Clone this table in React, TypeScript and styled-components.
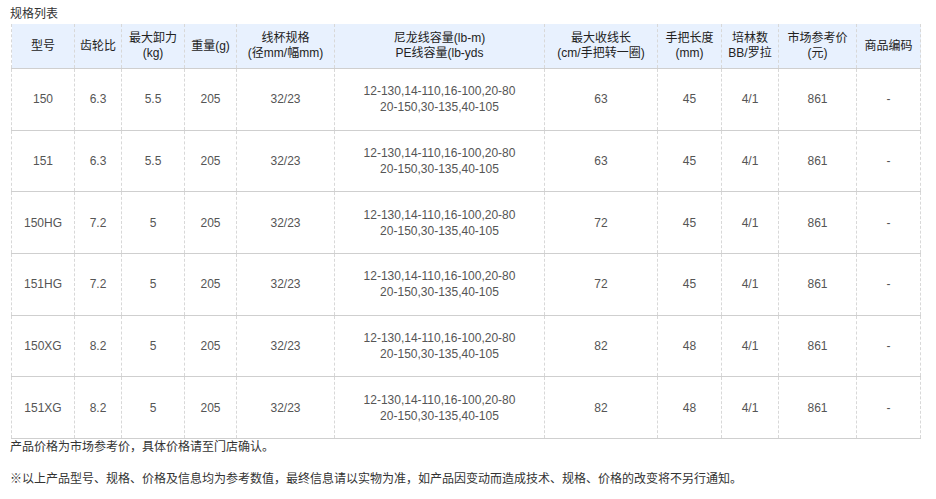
import React from "react";
import styled, { createGlobalStyle } from "styled-components";

const Global = createGlobalStyle`
  html, body { margin: 0; padding: 0; background: #fff; }
  body { font-family: "Liberation Sans", Arial, "Noto Sans CJK SC", sans-serif; font-size: 12px; color: #333; }
`;

const Page = styled.div`
  padding: 4px 0 0 10px;
  width: 926px;
  box-sizing: border-box;
`;

const Title = styled.div`
  font-size: 12px;
  line-height: 20px;
  color: #333;
`;

const Table = styled.table`
  margin-left: 1px;
  border-collapse: collapse;
  table-layout: fixed;
  width: 909px;
`;

const Th = styled.th`
  background: #e8f1fe;
  height: 44px;
  padding: 0;
  font-weight: normal;
  font-size: 12px;
  line-height: 15px;
  color: #222;
  text-align: center;
  vertical-align: middle;
  border-left: 1px dashed #d8d8d8;
  border-right: 1px dashed #d8d8d8;
  border-bottom: 1px solid #cfcfcf;
`;

const Td = styled.td`
  height: 60.7px;
  padding: 0;
  font-size: 12px;
  line-height: 16px;
  color: #555;
  text-align: center;
  vertical-align: middle;
  border-left: 1px dashed #d8d8d8;
  border-right: 1px dashed #d8d8d8;
  border-bottom: 1px solid #cfcfcf;
`;

const Note = styled.p<{ $gap?: number }>`
  margin: ${(p) => p.$gap ?? 0}px 0 0;
  font-size: 12px;
  line-height: 16px;
  color: #333;
`;

const widths = [63, 47, 63, 52, 98, 210, 113, 64, 57, 78, 64];

const headers: string[][] = [
  ["型号"],
  ["齿轮比"],
  ["最大卸力", "(kg)"],
  ["重量(g)"],
  ["线杯规格", "(径mm/幅mm)"],
  ["尼龙线容量(lb-m)", "PE线容量(lb-yds"],
  ["最大收线长", "(cm/手把转一圈)"],
  ["手把长度", "(mm)"],
  ["培林数", "BB/罗拉"],
  ["市场参考价", "(元)"],
  ["商品编码"],
];

const cap = ["12-130,14-110,16-100,20-80", "20-150,30-135,40-105"];

const rows: (string | string[])[][] = [
  ["150", "6.3", "5.5", "205", "32/23", cap, "63", "45", "4/1", "861", "-"],
  ["151", "6.3", "5.5", "205", "32/23", cap, "63", "45", "4/1", "861", "-"],
  ["150HG", "7.2", "5", "205", "32/23", cap, "72", "45", "4/1", "861", "-"],
  ["151HG", "7.2", "5", "205", "32/23", cap, "72", "45", "4/1", "861", "-"],
  ["150XG", "8.2", "5", "205", "32/23", cap, "82", "48", "4/1", "861", "-"],
  ["151XG", "8.2", "5", "205", "32/23", cap, "82", "48", "4/1", "861", "-"],
];

const Lines = ({ v }: { v: string | string[] }) => {
  const arr = Array.isArray(v) ? v : [v];
  return (
    <>
      {arr.map((l, i) => (
        <React.Fragment key={i}>
          {i > 0 && <br />}
          {l}
        </React.Fragment>
      ))}
    </>
  );
};

export default function App() {
  return (
    <>
      <Global />
      <Page>
        <Title>规格列表</Title>
        <Table>
          <colgroup>
            {widths.map((w, i) => (
              <col key={i} style={{ width: w }} />
            ))}
          </colgroup>
          <thead>
            <tr>
              {headers.map((h, i) => (
                <Th key={i}>
                  <Lines v={h} />
                </Th>
              ))}
            </tr>
          </thead>
          <tbody>
            {rows.map((r, i) => (
              <tr key={i}>
                {r.map((c, j) => (
                  <Td key={j}>
                    <Lines v={c} />
                  </Td>
                ))}
              </tr>
            ))}
          </tbody>
        </Table>
        <Note>产品价格为市场参考价，具体价格请至门店确认。</Note>
        <Note $gap={16}>
          ※以上产品型号、规格、价格及信息均为参考数值，最终信息请以实物为准，如产品因变动而造成技术、规格、价格的改变将不另行通知。
        </Note>
      </Page>
    </>
  );
}
